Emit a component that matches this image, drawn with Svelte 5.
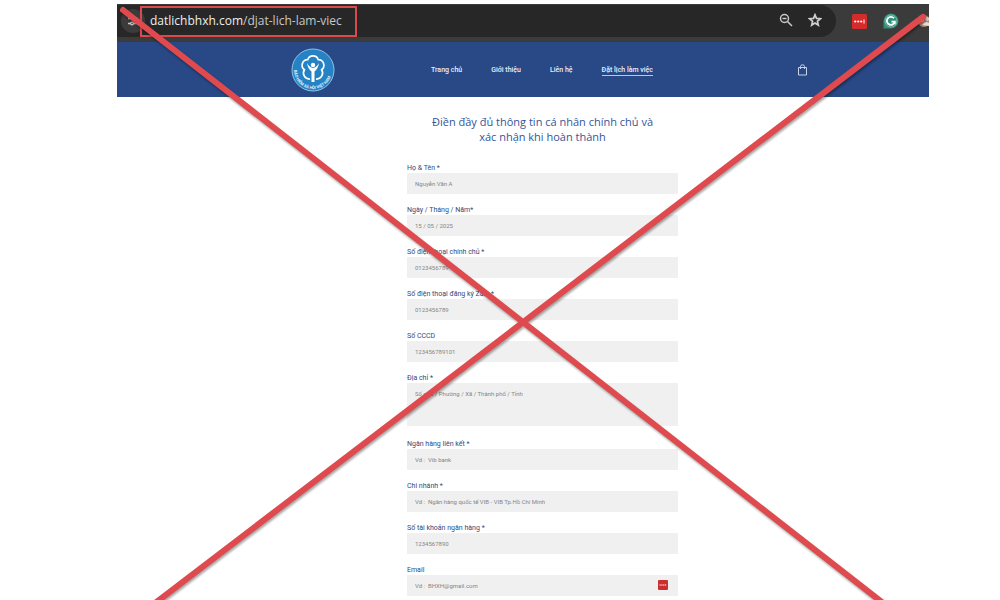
<script lang="ts">
    const links = ['Trang chủ', 'Giới thiệu', 'Liên hệ', 'Đặt lịch làm việc'];

    const fields = [
        { id: 'name', label: 'Họ & Tên *', hint: 'Nguyễn Văn A' },
        { id: 'date', label: 'Ngày / Tháng / Năm*', hint: '15 / 05 / 2025' },
        { id: 'phone', label: 'Số điện thoại chính chủ *', hint: '0123456789' },
        { id: 'zalo', label: 'Số điện thoại đăng ký Zalo *', hint: '0123456789' },
        { id: 'cccd', label: 'Số CCCD', hint: '123456789101' },
        { id: 'address', label: 'Địa chỉ *', hint: 'Số nhà / Phường / Xã / Thành phố / Tỉnh', area: true },
        { id: 'bank', label: 'Ngân hàng liên kết *', hint: 'Vd :  Vib bank' },
        { id: 'branch', label: 'Chi nhánh *', hint: 'Vd :  Ngân hàng quốc tế VIB - VIB Tp.Hồ Chí Minh' },
        { id: 'account', label: 'Số tài khoản ngân hàng *', hint: '1234567890' },
        { id: 'email', label: 'Email', hint: 'Vd :  BHXH@gmail.com', manager: true }
    ];
</script>

<div class="page">
    <div class="browser">
        <div class="toolbar">
            <div class="omnibox">
                <button class="site" aria-label="Site settings">
                    <svg width="12" height="12" viewBox="0 0 12 12" fill="none" stroke="#c8c8c8" stroke-width="1.3">
                        <path d="M1 3.5h4M8.5 3.5H11M1 8.5h2.5M7 8.5h4" />
                        <circle cx="7" cy="3.5" r="1.4" />
                        <circle cx="5" cy="8.5" r="1.4" />
                    </svg>
                </button>
                <div class="url"><b>datlichbhxh.com</b>/djat-lich-lam-viec</div>
                <button class="tool" aria-label="Zoom out">
                    <svg width="14" height="14" viewBox="0 0 14 14" fill="none" stroke="#c9c9c9" stroke-width="1.5">
                        <circle cx="5.5" cy="5.5" r="4" />
                        <path d="M8.5 8.5L13 13M3.5 5.5h4" />
                    </svg>
                </button>
                <button class="tool" aria-label="Bookmark">
                    <svg width="14" height="14" viewBox="0 0 14 14" fill="none" stroke="#d0d0d0" stroke-width="1.7">
                        <path d="M7 1.8l1.5 3.6 3.9.3-3 2.6.9 3.800L7 10.100l-3.300 2 .9-3.800-3-2.600 3.900-.3z" />
                    </svg>
                </button>
            </div>
            <button class="tool" aria-label="Password manager">
                <svg width="15" height="15" viewBox="0 0 15 15">
                    <rect width="15" height="15" rx="1.5" fill="#d62b2b" />
                    <g fill="#fff">
                        <circle cx="3.2" cy="7.5" r="1.1" />
                        <circle cx="6.2" cy="7.5" r="1.1" />
                        <circle cx="9.2" cy="7.5" r="1.1" />
                        <rect x="11.5" y="5.5" width="1" height="4" />
                    </g>
                </svg>
            </button>
            <button class="tool" aria-label="Grammar checker">
                <svg width="16" height="16" viewBox="0 0 16 16">
                    <path d="M.5 15.500V8A7.500 7.500 0 1 1 8 15.500z" fill="#2f8f79" />
                    <circle cx="8" cy="8" r="6" fill="none" stroke="#8fc2b5" stroke-width=".8" />
                    <path d="M11 5.300A4 4 0 1 0 11.800 8.700H8.500M11.800 8.700v2.600" fill="none" stroke="#fff" stroke-width="1.800" />
                </svg>
            </button>
            <button class="tool extension" aria-label="Extension">
                <svg width="12" height="14" viewBox="0 0 12 14">
                    <circle cx="7" cy="7" r="6" fill="#b98a6a" />
                    <circle cx="5" cy="6" r="2" fill="#eee" />
                    <path d="M5 11q3-5 7-2v3z" fill="#e6ded6" />
                    <circle cx="10" cy="5" r="2" fill="#ddd" />
                </svg>
            </button>
        </div>

        <header>
            <a class="logo" href="#home" aria-label="Bảo hiểm xã hội Việt Nam">
                <svg width="44" height="44" viewBox="0 0 44 44">
                    <circle cx="22" cy="22" r="21" fill="#2583c5" stroke="#8fc3e6" />
                    <path
                        d="M19 31A6 6 0 0 1 13.400 21.800A5.600 5.600 0 0 1 16.700 11.700A5.600 5.600 0 0 1 27.300 11.700A5.600 5.600 0 0 1 30.600 21.800A6 6 0 0 1 25 31"
                        fill="none"
                        stroke="#fff"
                        stroke-width="1.700"
                    />
                    <circle cx="22" cy="17" r="2.200" fill="#fff" />
                    <path d="M16 15q1 6 4.500 8.500V34h3V23.500Q27 21 28 15q-2.500 4.500-6 5-3.500-.5-6-5z" fill="#fff" />
                    <path id="ring" d="M3 22a19 19 0 0 0 38 0" fill="none" />
                    <text font-size="4" font-weight="700" fill="#e4f1fa">
                        <textPath href="#ring">BẢO HIỂM XÃ HỘI VIỆT NAM</textPath>
                    </text>
                </svg>
            </a>
            <nav>
                {#each links as link, i}
                    <a href="#{i}" class:active={i === 3}>{link}</a>
                {/each}
            </nav>
            <button class="cart" aria-label="Cart">
                <svg width="11" height="12" viewBox="0 0 11 12" fill="none" stroke="#c5d2ea">
                    <path d="M1.5 3.5h8v7.500h-8zM3.500 5V2.500a2 1.700 0 0 1 4 0V5" />
                </svg>
            </button>
        </header>

        <main>
            <h1>Điền đầy đủ thông tin cá nhân chính chủ và xác nhận khi hoàn thành</h1>
            <form>
                {#each fields as field}
                    <div class="field">
                        <label for={field.id}>{field.label}</label>
                        {#if field.area}
                            <textarea id={field.id} placeholder={field.hint}></textarea>
                        {:else}
                            <input id={field.id} type="text" placeholder={field.hint} />
                        {/if}
                        {#if field.manager}
                            <svg class="badge" width="10" height="10" viewBox="0 0 10 10">
                                <rect width="10" height="10" rx="1" fill="#c9302f" />
                                <path d="M1.5 5h7" stroke="#f3b5b5" stroke-width="1.3" stroke-dasharray="1.3 .5" />
                            </svg>
                        {/if}
                    </div>
                {/each}
            </form>
        </main>
    </div>

    <div class="url-frame"></div>
    <svg class="cross" viewBox="0 0 1000 600" preserveAspectRatio="none" aria-hidden="true">
        <path d="M123 10L892 610M923 17L146 610" />
    </svg>
</div>

<style>
    :global(body) {
        margin: 0;
        background: #fff;
    }

    .page {
        position: relative;
        overflow: hidden;
        padding: 4px 71px 4px 117px;
        font-family: Roboto, 'Open Sans', sans-serif;
    }

    button {
        padding: 0;
        border: 0;
        background: none;
    }

    svg {
        display: block;
    }

    .toolbar {
        display: flex;
        align-items: center;
        gap: 16px;
        height: 38px;
        background: #3b3b3b;
        overflow: hidden;
    }

    .omnibox {
        display: flex;
        flex: 1;
        align-items: center;
        gap: 15px;
        height: 32px;
        margin-bottom: 4px;
        padding: 0 14px 0 4px;
        border-radius: 0 16px 16px 0;
        background: #272727;
    }

    .site {
        display: grid;
        place-items: center;
        width: 24px;
        height: 24px;
        border-radius: 50%;
        background: #3b3b3b;
    }

    .url {
        flex: 1;
        margin-left: -10px;
        color: #c8c8c8;
        font: 12px/16px 'Open Sans', sans-serif;
    }

    .url b {
        color: #eee;
        font-weight: 400;
    }

    .tool {
        margin-bottom: 2px;
    }

    .toolbar > .tool {
        margin-bottom: 4px;
    }

    .toolbar > .extension {
        margin-left: 2px;
    }

    header {
        display: flex;
        align-items: center;
        height: 55px;
        padding: 0 121px 0 174px;
        background: #284886;
    }

    nav {
        display: flex;
        flex: 1;
        gap: 29px;
        margin-left: 96px;
    }

    nav a {
        padding-top: 1px;
        border-bottom: 1px solid transparent;
        color: #e8eefa;
        font-size: 7px;
        font-weight: 500;
        line-height: 10px;
        text-decoration: none;
    }

    nav a.active {
        border-color: #b9c7e2;
    }

    main {
        width: 271px;
        margin: 0 auto;
        padding: 17px 0 0 39px;
    }

    h1 {
        width: 230px;
        margin: 0 auto 19px;
        color: #34559a;
        font: 400 11px/15px 'Open Sans', sans-serif;
        text-align: center;
    }

    .field {
        position: relative;
        display: flex;
        flex-direction: column;
        margin-bottom: 11px;
    }

    .field:last-child {
        margin-bottom: 0;
    }

    label {
        color: #2f4a7c;
        font-size: 7px;
        line-height: 10px;
    }

    input,
    textarea {
        box-sizing: border-box;
        width: 100%;
        height: 21px;
        margin: 0;
        padding: 0 8px;
        border: 0;
        border-radius: 0;
        background: #f0f0f0;
        font: 6px/10px Roboto, sans-serif;
        resize: none;
    }

    textarea {
        height: 43px;
        margin-bottom: 2px;
        padding-top: 6px;
    }

    input::placeholder,
    textarea::placeholder {
        color: #858585;
        opacity: 1;
    }

    .badge {
        position: absolute;
        right: 10px;
        bottom: 6px;
    }

    .url-frame {
        position: absolute;
        top: 6px;
        left: 140px;
        box-sizing: border-box;
        width: 217px;
        height: 31px;
        border: 2px solid #d9494d;
    }

    .cross {
        position: absolute;
        top: 0;
        left: 0;
        width: 100%;
        height: 600px;
        fill: none;
        stroke: #df4a4f;
        stroke-width: 6;
        stroke-linecap: round;
        filter: drop-shadow(1px 2px 1px rgba(0, 0, 0, 0.35));
    }
</style>
